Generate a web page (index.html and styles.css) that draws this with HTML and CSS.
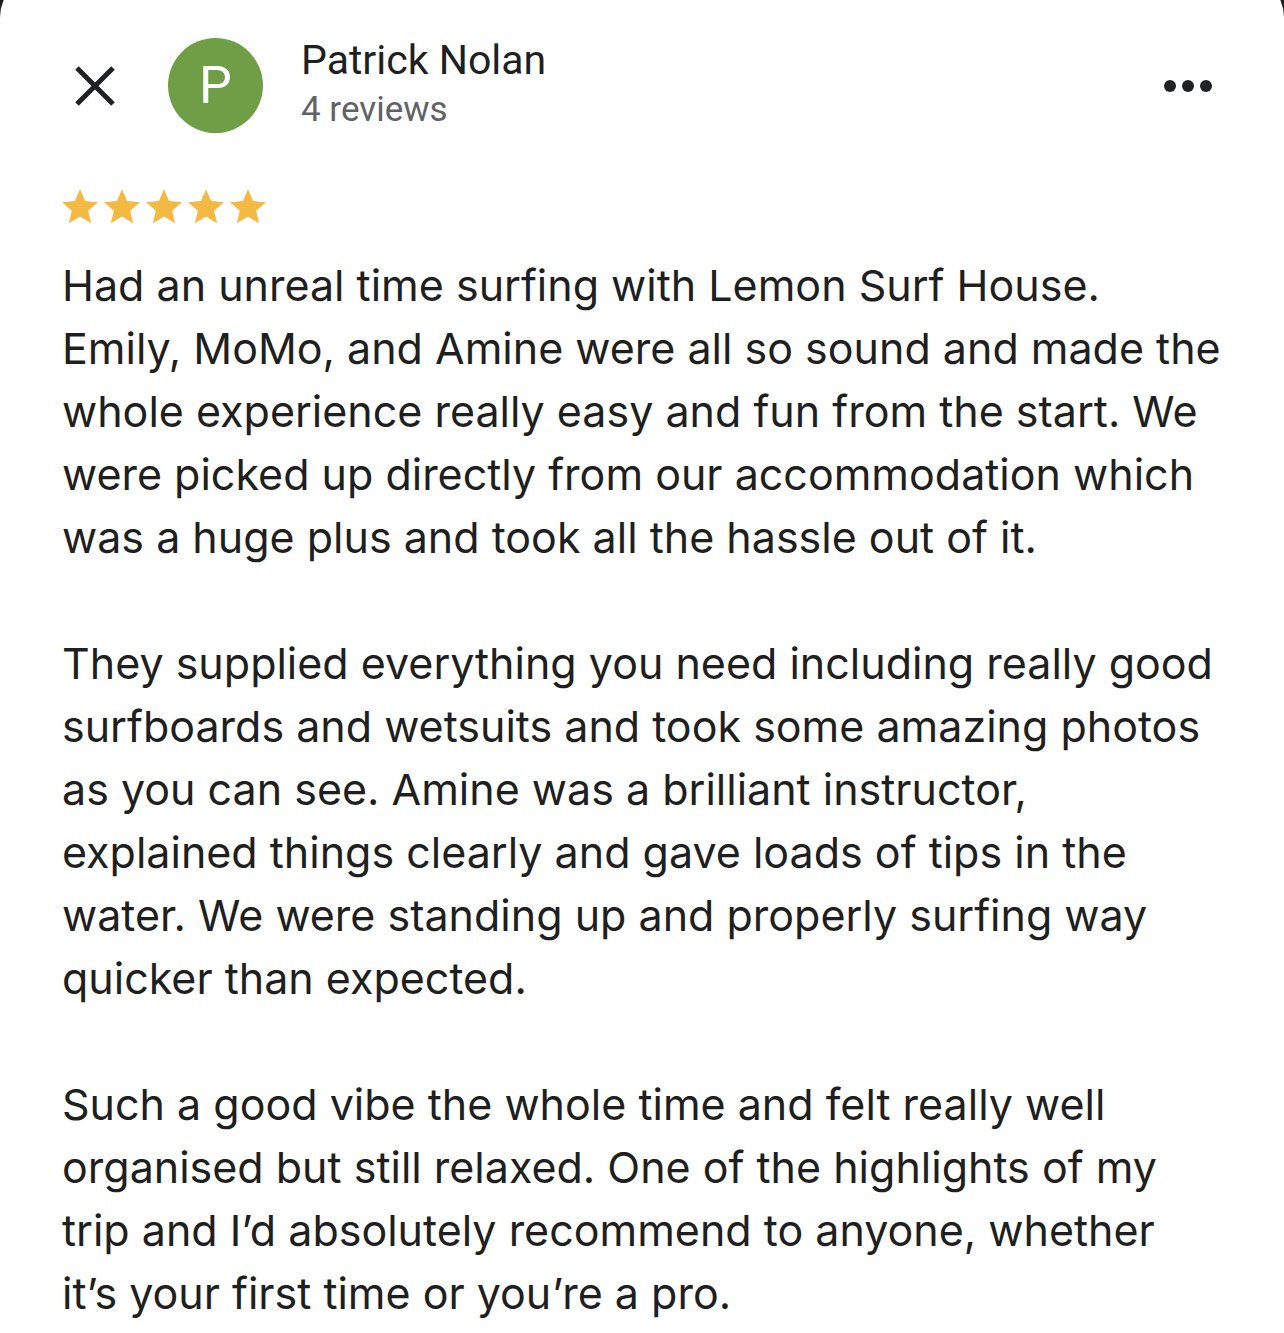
FILE: index.html
```html
<!DOCTYPE html>
<html lang="en">
<head>
<meta charset="utf-8">
<title>Review</title>
<link rel="stylesheet" href="styles.css">
</head>
<body>
<div class="card">
  <header class="header">
    <button class="close" aria-label="Close">
      <svg width="40" height="40" viewBox="0 0 40 40"><path d="M2 2L38 38M38 2L2 38" stroke="#202124" stroke-width="5" stroke-linecap="butt"/></svg>
    </button>
    <div class="avatar">P</div>
    <div class="who">
      <div class="name">Patrick Nolan</div>
      <div class="count">4 reviews</div>
    </div>
    <button class="more" aria-label="More">
      <svg width="48" height="12" viewBox="0 0 48 12"><circle cx="6" cy="6" r="6" fill="#202124"/><circle cx="24" cy="6" r="6" fill="#202124"/><circle cx="42" cy="6" r="6" fill="#202124"/></svg>
    </button>
  </header>
  <div class="stars">
    <svg class="star" viewBox="2 2 20 19.3"><path d="M12 17.27L18.18 21l-1.64-7.03L22 9.24l-7.19-.61L12 2 9.19 8.63 2 9.24l5.46 4.73L5.82 21z"/></svg>
    <svg class="star" viewBox="2 2 20 19.3"><path d="M12 17.27L18.18 21l-1.64-7.03L22 9.24l-7.19-.61L12 2 9.19 8.63 2 9.24l5.46 4.73L5.82 21z"/></svg>
    <svg class="star" viewBox="2 2 20 19.3"><path d="M12 17.27L18.18 21l-1.64-7.03L22 9.24l-7.19-.61L12 2 9.19 8.63 2 9.24l5.46 4.73L5.82 21z"/></svg>
    <svg class="star" viewBox="2 2 20 19.3"><path d="M12 17.27L18.18 21l-1.64-7.03L22 9.24l-7.19-.61L12 2 9.19 8.63 2 9.24l5.46 4.73L5.82 21z"/></svg>
    <svg class="star" viewBox="2 2 20 19.3"><path d="M12 17.27L18.18 21l-1.64-7.03L22 9.24l-7.19-.61L12 2 9.19 8.63 2 9.24l5.46 4.73L5.82 21z"/></svg>
  </div>
  <div class="review">
    <p>Had an unreal time surfing with Lemon Surf House.<br>Emily, MoMo, and Amine were all so sound and made the<br>whole experience really easy and fun from the start. We<br>were picked up directly from our accommodation which<br>was a huge plus and took all the hassle out of it.</p>
    <p>They supplied everything you need including really good<br>surfboards and wetsuits and took some amazing photos<br>as you can see. Amine was a brilliant instructor,<br>explained things clearly and gave loads of tips in the<br>water. We were standing up and properly surfing way<br>quicker than expected.</p>
    <p>Such a good vibe the whole time and felt really well<br>organised but still relaxed. One of the highlights of my<br>trip and I’d absolutely recommend to anyone, whether<br>it’s your first time or you’re a pro.</p>
  </div>
</div>
</body>
</html>
```
FILE: styles.css
```css
html, body {
  margin: 0;
  padding: 0;
}
body {
  background: #1e1e1e;
  font-family: Inter, "Noto Sans", sans-serif;
  overflow: hidden;
  height: 1333px;
}
.card {
  background: #ffffff;
  margin-top: -23px;
  border-radius: 40px 40px 0 0;
  height: 1356px;
  box-sizing: border-box;
  padding-top: 61px;
  overflow: hidden;
}
.header {
  display: flex;
  align-items: center;
  padding-left: 75px;
  padding-right: 72px;
  height: 95px;
}
.close {
  border: 0;
  background: none;
  padding: 0;
  width: 40px;
  height: 40px;
  display: flex;
}
.avatar {
  width: 95px;
  height: 95px;
  border-radius: 50%;
  background: #6f9e47;
  color: #fff;
  font-family: Roboto, sans-serif;
  font-size: 52px;
  display: flex;
  align-items: center;
  justify-content: center;
  margin-left: 53px;
  line-height: 1;
}
.who {
  margin-left: 38px;
  display: flex;
  flex-direction: column;
  font-family: Roboto, sans-serif;
}
.name {
  font-size: 41px;
  line-height: 46px;
  color: #1f1f1f;
  margin-top: -4px;
}
.count {
  font-size: 35px;
  line-height: 42px;
  color: #5f6368;
  margin-top: 6px;
}
.more {
  margin-left: auto;
  border: 0;
  background: none;
  padding: 0;
  display: flex;
}
.stars {
  display: flex;
  gap: 6px;
  margin: 56px 0 0 62px;
}
.star {
  width: 36px;
  height: 35px;
  fill: #f4b942;
}
.review {
  margin: 30px 0 0 62px;
  color: #1f1f1f;
  font-size: 43px;
  line-height: 63px;
  white-space: nowrap;
}
.review p {
  margin: 0 0 63px 0;
}
```
